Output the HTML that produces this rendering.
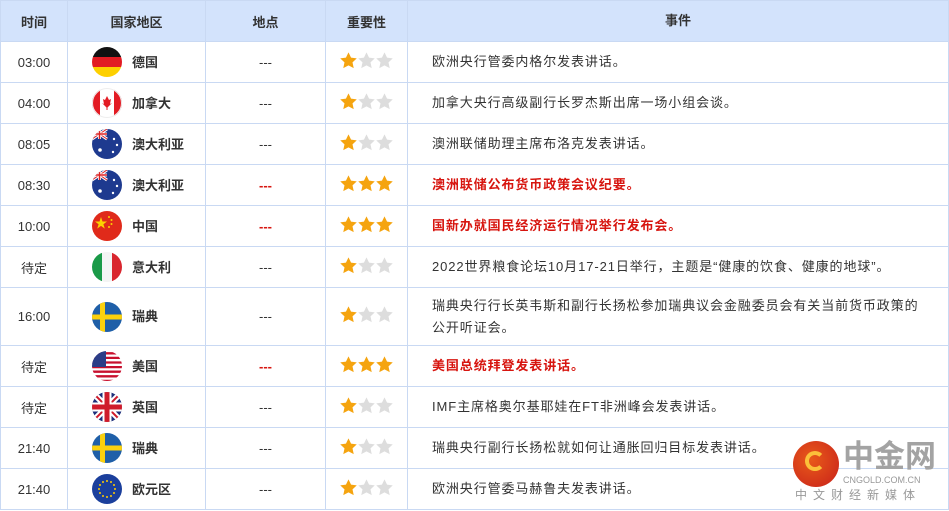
<!DOCTYPE html><html><head><meta charset="utf-8"><style>
body{margin:0;width:949px;height:511px;overflow:hidden;background:#fff;font-family:"Liberation Sans","Noto Sans CJK SC",sans-serif;font-size:13px;color:#333}
.r{display:flex;border-bottom:1px solid #c9d9f3;box-sizing:border-box;height:41px}
.r>div{border-right:1px solid #c9d9f3;box-sizing:border-box;display:flex;align-items:center;height:100%}
.h{background:#d3e3fc;height:42px;font-weight:bold;border-top:1px solid #c9d9f3}
.h>div{justify-content:center}
.c1{width:68px;justify-content:center;border-left:1px solid #c9d9f3}
.c2{width:138px;padding-left:24px}
.h .c2{padding-left:0}
.c3{width:120px;justify-content:center}
.c4{width:82px;padding-left:14px;padding-bottom:4px}
.h .c4{padding-left:0;padding-bottom:0}
.c5{flex:1;padding-left:24px;padding-right:20px;line-height:22px;letter-spacing:0.9px}
.h .c5{padding-left:0;padding-right:0;letter-spacing:0}
.c2 svg{width:30px;height:30px;margin-right:10px;flex:none}
.c2 b{font-weight:bold;line-height:1}
.red{color:#d7150f;font-weight:bold}
.c4 svg{width:17px;height:17px;margin-right:1px}
</style></head><body>
<svg width="0" height="0" style="position:absolute"><defs>
<clipPath id="cp"><circle cx="15" cy="15" r="15"/></clipPath>
<path id="st" d="M7 0.3L9.1 4.6L13.8 5.2L10.3 8.5L11.3 13.3L7 11L2.7 13.3L3.7 8.5L0.2 5.2L4.9 4.6Z"/>
<g id="au" clip-path="url(#cp)"><rect width="30" height="30" fill="#1e3a8f"/><path d="M0 0L15 10M15 0L0 10" stroke="#fff" stroke-width="3"/><path d="M0 0L15 10M15 0L0 10" stroke="#d22" stroke-width="1"/><path d="M7.5 0V10M0 5H15" stroke="#fff" stroke-width="3"/><path d="M7.5 0V10M0 5H15" stroke="#d22" stroke-width="1.5"/><circle cx="8" cy="21" r="1.8" fill="#fff"/><circle cx="22" cy="10" r="1.2" fill="#fff"/><circle cx="25" cy="16" r="1.2" fill="#fff"/><circle cx="21" cy="23" r="1.2" fill="#fff"/></g>
<g id="se" clip-path="url(#cp)"><rect width="30" height="30" fill="#1f5fa8"/><rect x="8" width="5" height="30" fill="#fbd10d"/><rect y="12.5" width="30" height="5" fill="#fbd10d"/></g>
</defs></svg>
<div class="r h"><div class="c1">时间</div><div class="c2">国家地区</div><div class="c3">地点</div><div class="c4">重要性</div><div class="c5">事件</div></div>

<div class="r"><div class="c1">03:00</div><div class="c2"><svg viewBox="0 0 30 30"><g clip-path="url(#cp)"><rect width="30" height="10" fill="#111"/><rect y="10" width="30" height="10" fill="#e21b23"/><rect y="20" width="30" height="10" fill="#fdd000"/></g></svg><b>德国</b></div><div class="c3">---</div><div class="c4"><svg viewBox="0 0 14 14"><use href="#st" fill="#f5a40f"/></svg><svg viewBox="0 0 14 14"><use href="#st" fill="#ddd"/></svg><svg viewBox="0 0 14 14"><use href="#st" fill="#ddd"/></svg></div><div class="c5">欧洲央行管委内格尔发表讲话。</div></div>

<div class="r"><div class="c1">04:00</div><div class="c2"><svg viewBox="0 0 30 30"><g clip-path="url(#cp)"><rect width="30" height="30" fill="#fff"/><rect width="8" height="30" fill="#e31b23"/><rect x="22" width="8" height="30" fill="#e31b23"/><path d="M15 8l2 4 2-1-1 5 2-1-5 5-5-5 2 1-1-5 2 1z" fill="#e31b23"/><rect x="14.5" y="18" width="1" height="4" fill="#e31b23"/></g><circle cx="15" cy="15" r="14.5" fill="none" stroke="#eee"/></svg><b>加拿大</b></div><div class="c3">---</div><div class="c4"><svg viewBox="0 0 14 14"><use href="#st" fill="#f5a40f"/></svg><svg viewBox="0 0 14 14"><use href="#st" fill="#ddd"/></svg><svg viewBox="0 0 14 14"><use href="#st" fill="#ddd"/></svg></div><div class="c5">加拿大央行高级副行长罗杰斯出席一场小组会谈。</div></div>

<div class="r"><div class="c1">08:05</div><div class="c2"><svg viewBox="0 0 30 30"><use href="#au"/></svg><b>澳大利亚</b></div><div class="c3">---</div><div class="c4"><svg viewBox="0 0 14 14"><use href="#st" fill="#f5a40f"/></svg><svg viewBox="0 0 14 14"><use href="#st" fill="#ddd"/></svg><svg viewBox="0 0 14 14"><use href="#st" fill="#ddd"/></svg></div><div class="c5">澳洲联储助理主席布洛克发表讲话。</div></div>

<div class="r"><div class="c1">08:30</div><div class="c2"><svg viewBox="0 0 30 30"><use href="#au"/></svg><b>澳大利亚</b></div><div class="c3 red">---</div><div class="c4"><svg viewBox="0 0 14 14"><use href="#st" fill="#f5a40f"/></svg><svg viewBox="0 0 14 14"><use href="#st" fill="#f5a40f"/></svg><svg viewBox="0 0 14 14"><use href="#st" fill="#f5a40f"/></svg></div><div class="c5 red">澳洲联储公布货币政策会议纪要。</div></div>

<div class="r"><div class="c1">10:00</div><div class="c2"><svg viewBox="0 0 30 30"><g clip-path="url(#cp)"><rect width="30" height="30" fill="#e02a1a"/><path d="M9 6l1.5 4.5h4.5l-3.6 2.7 1.4 4.4-3.8-2.7-3.8 2.7 1.4-4.4-3.6-2.7h4.5z" fill="#fbd300"/><circle cx="17" cy="6" r="1" fill="#fbd300"/><circle cx="19.5" cy="9" r="1" fill="#fbd300"/><circle cx="19.5" cy="13" r="1" fill="#fbd300"/><circle cx="17" cy="16" r="1" fill="#fbd300"/></g></svg><b>中国</b></div><div class="c3 red">---</div><div class="c4"><svg viewBox="0 0 14 14"><use href="#st" fill="#f5a40f"/></svg><svg viewBox="0 0 14 14"><use href="#st" fill="#f5a40f"/></svg><svg viewBox="0 0 14 14"><use href="#st" fill="#f5a40f"/></svg></div><div class="c5 red">国新办就国民经济运行情况举行发布会。</div></div>

<div class="r"><div class="c1">待定</div><div class="c2"><svg viewBox="0 0 30 30"><g clip-path="url(#cp)"><rect width="10" height="30" fill="#1a9a48"/><rect x="10" width="10" height="30" fill="#f4f4f4"/><rect x="20" width="10" height="30" fill="#d9262e"/></g></svg><b>意大利</b></div><div class="c3">---</div><div class="c4"><svg viewBox="0 0 14 14"><use href="#st" fill="#f5a40f"/></svg><svg viewBox="0 0 14 14"><use href="#st" fill="#ddd"/></svg><svg viewBox="0 0 14 14"><use href="#st" fill="#ddd"/></svg></div><div class="c5">2022世界粮食论坛10月17-21日举行，主题是“健康的饮食、健康的地球”。</div></div>

<div class="r" style="height:58px"><div class="c1">16:00</div><div class="c2"><svg viewBox="0 0 30 30"><use href="#se"/></svg><b>瑞典</b></div><div class="c3">---</div><div class="c4"><svg viewBox="0 0 14 14"><use href="#st" fill="#f5a40f"/></svg><svg viewBox="0 0 14 14"><use href="#st" fill="#ddd"/></svg><svg viewBox="0 0 14 14"><use href="#st" fill="#ddd"/></svg></div><div class="c5">瑞典央行行长英韦斯和副行长扬松参加瑞典议会金融委员会有关当前货币政策的公开听证会。</div></div>

<div class="r"><div class="c1">待定</div><div class="c2"><svg viewBox="0 0 30 30"><g clip-path="url(#cp)"><rect width="30" height="30" fill="#fff"/><path d="M0 2.3h30M0 6.9h30M0 11.5h30M0 16.1h30M0 20.7h30M0 25.3h30M0 29.9h30" stroke="#c8102e" stroke-width="2.3"/><rect width="14" height="16" fill="#2b3d87"/></g></svg><b>美国</b></div><div class="c3 red">---</div><div class="c4"><svg viewBox="0 0 14 14"><use href="#st" fill="#f5a40f"/></svg><svg viewBox="0 0 14 14"><use href="#st" fill="#f5a40f"/></svg><svg viewBox="0 0 14 14"><use href="#st" fill="#f5a40f"/></svg></div><div class="c5 red">美国总统拜登发表讲话。</div></div>

<div class="r"><div class="c1">待定</div><div class="c2"><svg viewBox="0 0 30 30"><g clip-path="url(#cp)"><rect width="30" height="30" fill="#1d2f7a"/><path d="M0 0L30 30M30 0L0 30" stroke="#fff" stroke-width="6"/><path d="M0 0L30 30M30 0L0 30" stroke="#cf1b2b" stroke-width="2"/><path d="M15 0V30M0 15H30" stroke="#fff" stroke-width="9"/><path d="M15 0V30M0 15H30" stroke="#cf1b2b" stroke-width="5"/></g></svg><b>英国</b></div><div class="c3">---</div><div class="c4"><svg viewBox="0 0 14 14"><use href="#st" fill="#f5a40f"/></svg><svg viewBox="0 0 14 14"><use href="#st" fill="#ddd"/></svg><svg viewBox="0 0 14 14"><use href="#st" fill="#ddd"/></svg></div><div class="c5">IMF主席格奥尔基耶娃在FT非洲峰会发表讲话。</div></div>

<div class="r"><div class="c1">21:40</div><div class="c2"><svg viewBox="0 0 30 30"><use href="#se"/></svg><b>瑞典</b></div><div class="c3">---</div><div class="c4"><svg viewBox="0 0 14 14"><use href="#st" fill="#f5a40f"/></svg><svg viewBox="0 0 14 14"><use href="#st" fill="#ddd"/></svg><svg viewBox="0 0 14 14"><use href="#st" fill="#ddd"/></svg></div><div class="c5">瑞典央行副行长扬松就如何让通胀回归目标发表讲话。</div></div>

<div class="r"><div class="c1">21:40</div><div class="c2"><svg viewBox="0 0 30 30"><g clip-path="url(#cp)"><rect width="30" height="30" fill="#1b3f9c"/><g fill="#fc0"><circle cx="15" cy="7" r="1"/><circle cx="15" cy="23" r="1"/><circle cx="7" cy="15" r="1"/><circle cx="23" cy="15" r="1"/><circle cx="19" cy="8" r="1"/><circle cx="11" cy="8" r="1"/><circle cx="19" cy="22" r="1"/><circle cx="11" cy="22" r="1"/><circle cx="8" cy="11" r="1"/><circle cx="22" cy="11" r="1"/><circle cx="8" cy="19" r="1"/><circle cx="22" cy="19" r="1"/></g></g></svg><b>欧元区</b></div><div class="c3">---</div><div class="c4"><svg viewBox="0 0 14 14"><use href="#st" fill="#f5a40f"/></svg><svg viewBox="0 0 14 14"><use href="#st" fill="#ddd"/></svg><svg viewBox="0 0 14 14"><use href="#st" fill="#ddd"/></svg></div><div class="c5">欧洲央行管委马赫鲁夫发表讲话。</div></div>

<div style="position:absolute;left:793px;top:441px;width:46px;height:46px;border-radius:50%;background:radial-gradient(circle at 40% 40%,#e85a1a,#c8201a)"><div style="position:absolute;left:12px;top:10px;width:20px;height:20px;border-radius:50%;border:4px solid #fbc13a;border-right-color:transparent;box-sizing:border-box"></div></div>
<div style="position:absolute;left:843px;top:441px;font-size:31px;line-height:32px;font-weight:bold;color:#a3a3a3">中金网</div>
<div style="position:absolute;left:843px;top:475px;font-size:9px;color:#999">CNGOLD.COM.CN</div>
<div style="position:absolute;left:795px;top:486px;font-size:12px;color:#999;letter-spacing:6px">中文财经新媒体</div>
</body></html>
